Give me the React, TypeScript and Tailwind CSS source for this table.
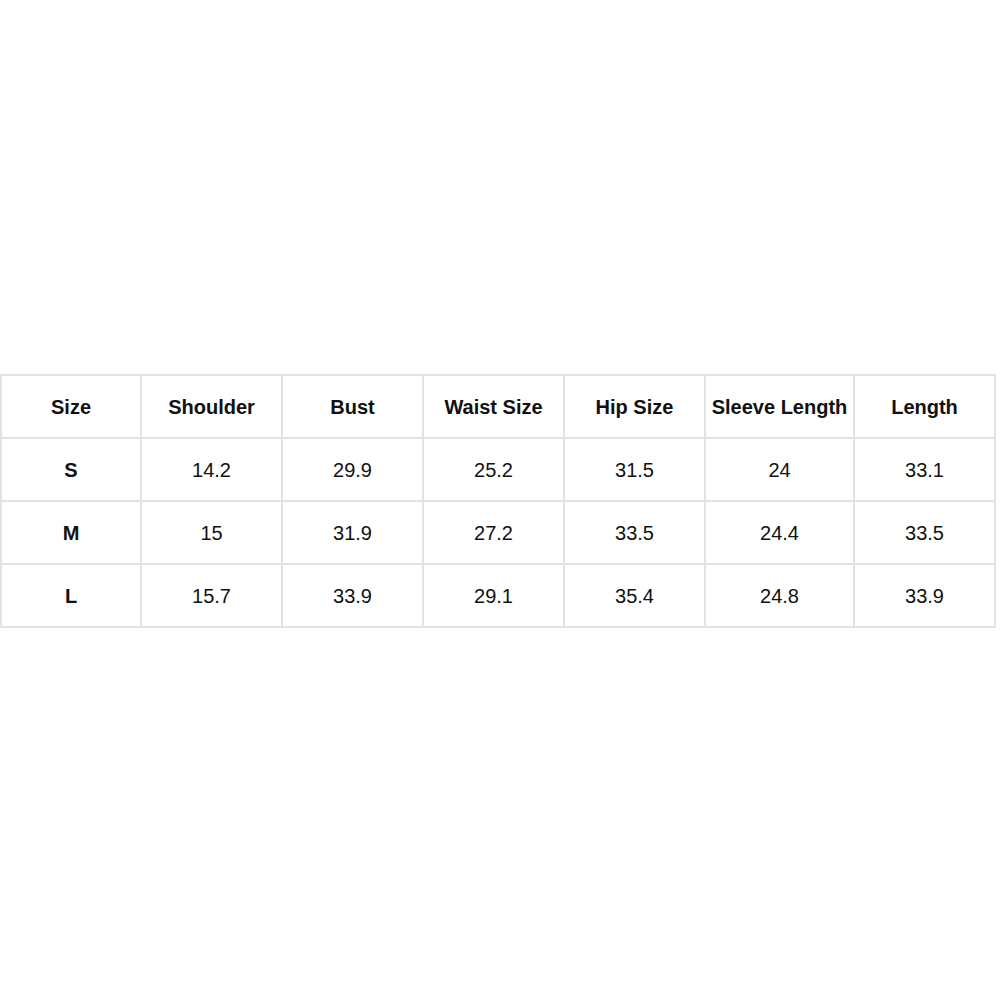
const headers = ['Size', 'Shoulder', 'Bust', 'Waist Size', 'Hip Size', 'Sleeve Length', 'Length']

const rows = [
  ['S', '14.2', '29.9', '25.2', '31.5', '24', '33.1'],
  ['M', '15', '31.9', '27.2', '33.5', '24.4', '33.5'],
  ['L', '15.7', '33.9', '29.1', '35.4', '24.8', '33.9'],
]

const widths = ['w-[140px]', 'w-[141px]', 'w-[141px]', 'w-[141px]', 'w-[141px]', 'w-[149px]', 'w-[141px]']

export default function App() {
  return (
    <div className="w-[1000px] h-[1000px] bg-white pt-[374px] font-['Liberation_Sans',Arial,sans-serif] text-[20px] text-[#111]">
      <table className="border-collapse table-fixed w-[994px]">
        <thead>
          <tr className="h-[63px]">
            {headers.map((h, i) => (
              <th key={h} className={`${widths[i]} border-2 border-[#e2e2e2] text-center font-bold p-0`}>
                {h}
              </th>
            ))}
          </tr>
        </thead>
        <tbody>
          {rows.map((r) => (
            <tr key={r[0]} className="h-[63px]">
              {r.map((c, i) => (
                <td
                  key={i}
                  className={`border-2 border-[#e2e2e2] text-center p-0 ${i === 0 ? 'font-bold' : 'font-normal'}`}
                >
                  {c}
                </td>
              ))}
            </tr>
          ))}
        </tbody>
      </table>
    </div>
  )
}
